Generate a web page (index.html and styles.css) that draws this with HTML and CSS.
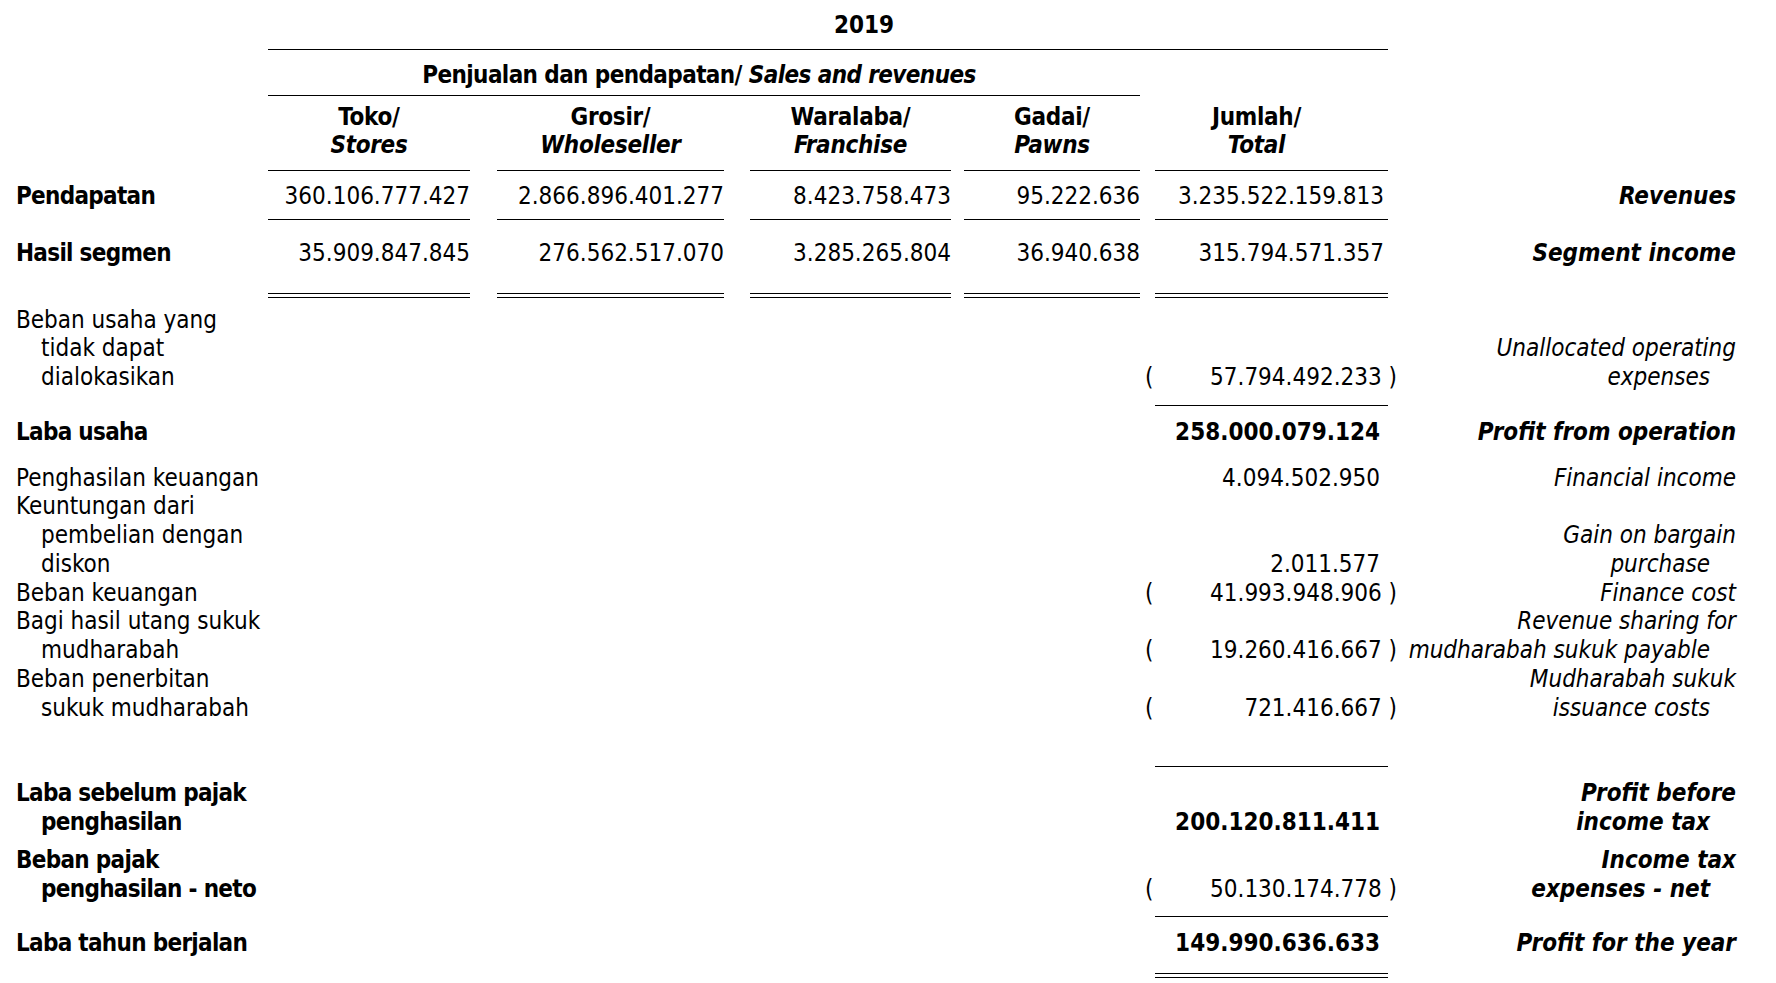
FILE: index.html
```html
<!DOCTYPE html>
<html lang="id">
<head>
    <meta charset="UTF-8">
    <title>Informasi segmen 2019</title>
    <link rel="stylesheet" href="styles.css">
</head>
<body>
    <div class="sheet">
        <div class="row">
            <div class="year">2019</div>
        </div>
        <div class="row">
            <div class="sales">Penjualan dan pendapatan/ <i>Sales and revenues</i></div>
        </div>
        <div class="row heads">
            <div class="toko">Toko/<br><i>Stores</i></div>
            <div class="grosir">Grosir/<br><i>Wholeseller</i></div>
            <div class="waralaba">Waralaba/<br><i>Franchise</i></div>
            <div class="gadai">Gadai/<br><i>Pawns</i></div>
            <div class="jumlah">Jumlah/<br><i>Total</i></div>
        </div>

        <!-- segment rows -->
        <div class="row seg revenue">
            <div class="lbl"><b>Pendapatan</b></div>
            <div class="toko num">360.106.777.427</div>
            <div class="grosir num">2.866.896.401.277</div>
            <div class="waralaba num">8.423.758.473</div>
            <div class="gadai num">95.222.636</div>
            <div class="jumlah num">3.235.522.159.813</div>
            <div class="en"><b><i>Revenues</i></b></div>
        </div>
        <div class="row seg income">
            <div class="lbl"><b>Hasil segmen</b></div>
            <div class="toko num">35.909.847.845</div>
            <div class="grosir num">276.562.517.070</div>
            <div class="waralaba num">3.285.265.804</div>
            <div class="gadai num">36.940.638</div>
            <div class="jumlah num">315.794.571.357</div>
            <div class="en"><b><i>Segment income</i></b></div>
        </div>
        <div class="row rule seg-end">
            <div class="toko dbl"></div>
            <div class="grosir dbl"></div>
            <div class="waralaba dbl"></div>
            <div class="gadai dbl"></div>
            <div class="jumlah dbl"></div>
        </div>

        <!-- unallocated / totals -->
        <div class="row unalloc">
            <div class="lbl">Beban usaha yang<br>tidak dapat<br>dialokasikan</div>
            <div class="jumlah num neg"><span>(</span><span>57.794.492.233 )</span></div>
            <div class="en"><i>Unallocated operating<span class="more">expenses</span></i></div>
        </div>
        <div class="row rule after-unalloc">
            <div class="jumlah line"></div>
        </div>
        <div class="row op-profit">
            <div class="lbl"><b>Laba usaha</b></div>
            <div class="jumlah num"><b>258.000.079.124</b></div>
            <div class="en"><b><i>Profit from operation</i></b></div>
        </div>

        <div class="row fin-income">
            <div class="lbl">Penghasilan keuangan</div>
            <div class="jumlah num">4.094.502.950</div>
            <div class="en"><i>Financial income</i></div>
        </div>
        <div class="row">
            <div class="lbl">Keuntungan dari<br>pembelian dengan<br>diskon</div>
            <div class="jumlah num">2.011.577</div>
            <div class="en"><i>Gain on bargain<span class="more">purchase</span></i></div>
        </div>
        <div class="row">
            <div class="lbl">Beban keuangan</div>
            <div class="jumlah num neg"><span>(</span><span>41.993.948.906 )</span></div>
            <div class="en"><i>Finance cost</i></div>
        </div>
        <div class="row">
            <div class="lbl">Bagi hasil utang sukuk<br>mudharabah</div>
            <div class="jumlah num neg"><span>(</span><span>19.260.416.667 )</span></div>
            <div class="en"><i>Revenue sharing for<span class="more">mudharabah sukuk payable</span></i></div>
        </div>
        <div class="row">
            <div class="lbl">Beban penerbitan<br>sukuk mudharabah</div>
            <div class="jumlah num neg"><span>(</span><span>721.416.667 )</span></div>
            <div class="en"><i>Mudharabah sukuk<span class="more">issuance costs</span></i></div>
        </div>
        <div class="row rule before-tax-line">
            <div class="jumlah line"></div>
        </div>

        <div class="row pbt">
            <div class="lbl"><b>Laba sebelum pajak<br>penghasilan</b></div>
            <div class="jumlah num"><b>200.120.811.411</b></div>
            <div class="en"><b><i>Profit before<span class="more">income tax</span></i></b></div>
        </div>
        <div class="row tax">
            <div class="lbl"><b>Beban pajak<br>penghasilan - neto</b></div>
            <div class="jumlah num neg"><span>(</span><span>50.130.174.778 )</span></div>
            <div class="en"><b><i>Income tax<span class="more">expenses - net</span></i></b></div>
        </div>
        <div class="row rule after-tax">
            <div class="jumlah line"></div>
        </div>
        <div class="row net">
            <div class="lbl"><b>Laba tahun berjalan</b></div>
            <div class="jumlah num"><b>149.990.636.633</b></div>
            <div class="en"><b><i>Profit for the year</i></b></div>
        </div>
        <div class="row rule net-end">
            <div class="jumlah dbl"></div>
        </div>
    </div>
</body>
</html>
```

FILE: styles.css
```css
body {
    margin: 0;
    background-color: #fff;
    color: #000;
    font-family: "DejaVu Sans Condensed", "DejaVu Sans", sans-serif;
    font-stretch: condensed;
    font-size: 24px;
    line-height: 28.75px;
}

.sheet {
    width: 1720px;
    padding: 11px 0 0 16px;
}

/* every line of the statement shares the same columns */
.row {
    display: grid;
    grid-template-columns: 252px 202px 254px 227px 189px 248px 348px;
    align-items: end;
    white-space: nowrap;
}

.lbl { grid-column: 1; }
.toko { grid-column: 2; }
.grosir { grid-column: 3; margin-left: 27px; }
.waralaba { grid-column: 4; margin-left: 26px; }
.gadai { grid-column: 5; margin-left: 13px; }
.jumlah { grid-column: 6; margin-left: 15px; }
.en { grid-column: 7; text-align: right; }

/* hanging indent for wrapped labels */
.lbl {
    padding-left: 25px;
    text-indent: -25px;
}

.lbl b {
    letter-spacing: -0.7px;
}

.en .more {
    display: block;
    padding-right: 26px;
}

.year {
    grid-column: 2 / 7;
    text-align: center;
    font-weight: bold;
    padding: 0 0 9px 72px;
    border-bottom: 1px solid #000;
}

.sales {
    grid-column: 2 / 6;
    text-align: center;
    font-weight: bold;
    letter-spacing: -0.6px;
    margin-top: 11px;
    padding: 0 10px 5px 0;
    border-bottom: 1px solid #000;
}

.heads {
    margin-top: 7px;
    font-weight: bold;
    letter-spacing: -0.3px;
    text-align: center;
}

.heads > div {
    padding-bottom: 10px;
    border-bottom: 1px solid #000;
}

.heads .jumlah {
    padding-right: 30px;
}

.num {
    text-align: right;
}

.jumlah.num {
    padding-right: 8px;
}

.seg {
    align-items: start;
}

.seg .jumlah.num {
    padding-right: 4px;
}

.revenue {
    margin-top: 10.5px;
}

.revenue .num {
    padding-bottom: 8.5px;
    border-bottom: 1px solid #000;
}

.income {
    margin-top: 19px;
}

.neg {
    display: flex;
    justify-content: space-between;
    margin-left: 5px;
    margin-right: -9px;
}

.jumlah.neg {
    padding-right: 0;
}

.line {
    border-top: 1px solid #000;
}

.dbl {
    height: 3px;
    border-top: 1px solid #000;
    border-bottom: 1px solid #000;
}

.seg-end { margin-top: 25px; }
.unalloc { margin-top: 8px; }
.after-unalloc { margin-top: 13px; }
.op-profit { margin-top: 12px; }
.fin-income { margin-top: 17px; }
.before-tax-line { margin-top: 44px; }
.pbt { margin-top: 11.5px; }
.tax { margin-top: 10px; }
.after-tax { margin-top: 12px; }
.net { margin-top: 12px; }
.net-end { margin-top: 15.5px; }
```
